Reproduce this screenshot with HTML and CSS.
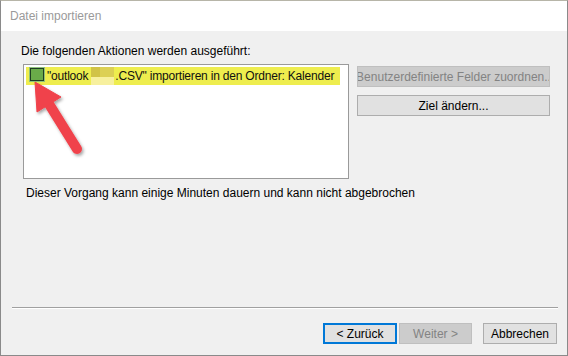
FILE: index.html
```html
<!DOCTYPE html>
<html lang="de">
<head>
<meta charset="utf-8">
<title>Datei importieren</title>
<link rel="stylesheet" href="styles.css">
</head>
<body>
<div class="window">
  <div class="titlebar">Datei importieren</div>
  <div class="content">
    <div class="label">Die folgenden Aktionen werden ausgeführt:</div>
    <div class="main-row">
      <div class="listbox">
        <div class="item">
          <span class="check"><span class="check-inner"></span></span>
          <span class="item-text">"outlook<span class="blur"></span>.CSV" importieren in den Ordner: Kalender</span>
        </div>
      </div>
      <div class="side-buttons">
        <div class="btn btn-wide disabled"><span class="btn-clip">Benutzerdefinierte Felder zuordnen..</span></div>
        <div class="btn btn-wide">Ziel ändern...</div>
      </div>
    </div>
    <div class="note">Dieser Vorgang kann einige Minuten dauern und kann nicht abgebrochen</div>
    <div class="footer">
      <div class="separator"></div>
      <div class="footer-buttons">
        <div class="btn btn-nav focused">&lt; Zurück</div>
        <div class="btn btn-nav btn-next disabled">Weiter &gt;</div>
        <div class="btn btn-nav cancel">Abbrechen</div>
      </div>
    </div>
  </div>
  <svg class="arrow" width="568" height="356" viewBox="0 0 568 356">
    <defs>
      <filter id="sh" x="-50%" y="-50%" width="200%" height="200%">
        <feDropShadow dx="1.5" dy="2" stdDeviation="1.6" flood-color="#000" flood-opacity="0.35"/>
      </filter>
    </defs>
    <g filter="url(#sh)" fill="#f0434b" stroke="#f0434b">
      <line x1="49" y1="104" x2="77" y2="149" stroke-width="10" stroke-linecap="round"/>
      <polygon points="35,82 61,97 37,112" stroke-width="1" stroke-linejoin="round"/>
    </g>
  </svg>
</div>
</body>
</html>
```
FILE: styles.css
```css
html, body {
  margin: 0;
  padding: 0;
}
body {
  width: 568px;
  height: 356px;
  overflow: hidden;
  font-family: "Liberation Sans", Arial, sans-serif;
  font-size: 12px;
  color: #000;
}
.window {
  position: relative;
  box-sizing: border-box;
  width: 568px;
  height: 356px;
  border: 1px solid #8a8a8a;
  border-top-color: #b7b5a8;
  display: flex;
  flex-direction: column;
  background: #f0f0f0;
}
.titlebar {
  height: 30px;
  background: #fff;
  color: #9a9a9a;
  padding-left: 9px;
  line-height: 30px;
  font-size: 12px;
}
.content {
  flex: 1;
  display: flex;
  flex-direction: column;
  padding: 0 0 0 19px;
}
.label {
  margin-top: 12px;
  height: 21px;
  line-height: 16px;
  padding-left: 1px;
}
.main-row {
  display: flex;
  gap: 8px;
}
.listbox {
  box-sizing: border-box;
  width: 326px;
  height: 115px;
  margin-left: 3px;
  background: #fff;
  border: 1px solid #9a9a9a;
  padding: 2px 0 0 2px;
}
.item {
  display: flex;
  align-items: flex-start;
  width: 314px;
  height: 18px;
  background: #eeed4e;
}
.check {
  flex: 0 0 auto;
  box-sizing: border-box;
  width: 16px;
  height: 15px;
  margin-left: 3px;
  padding: 1px;
  background: #8fc27a;
  display: flex;
}
.check-inner {
  flex: 1;
  border: 1px solid #1f3d22;
  background: #6aab49;
}
.item-text {
  margin-left: 2px;
  white-space: nowrap;
  color: #111;
  display: flex;
  align-items: center;
  height: 18px;
  letter-spacing: -0.2px;
}
.blur {
  display: inline-block;
  flex: 0 0 auto;
  width: 23px;
  height: 18px;
  margin: 0 1px 0 3px;
  background:
    linear-gradient(to bottom, transparent 0, transparent 10px, #f7f09e 10px, #f7f09e 18px),
    linear-gradient(to right, #d1c347 0, #d1c347 9px, #dcd055 9px, #dcd055 23px);
}
.side-buttons {
  display: flex;
  flex-direction: column;
  gap: 8px;
  padding-top: 2px;
}
.btn {
  box-sizing: border-box;
  height: 21px;
  border: 1px solid #adadad;
  background: #e1e1e1;
  display: flex;
  align-items: center;
  justify-content: center;
  white-space: nowrap;
  color: #000;
}
.btn-wide {
  width: 193px;
  overflow: hidden;
}
.btn.disabled {
  background: #cccccc;
  border-color: #bfbfbf;
  color: #838383;
}
.btn-clip {
  display: block;
  flex: 0 0 auto;
}
.note {
  margin-top: 6px;
  padding-left: 6px;
  line-height: 16px;
}
.footer {
  margin-top: auto;
  padding-bottom: 11px;
}
.separator {
  margin-left: -8px;
  width: 546px;
  height: 1px;
  background: #a0a0a0;
  border-bottom: 1px solid #fff;
}
.footer-buttons {
  display: flex;
  justify-content: flex-end;
  padding-right: 10px;
  margin-top: 14px;
  gap: 2px;
}
.btn-nav {
  width: 74px;
}
.btn-next {
  width: 73px;
}
.btn.focused {
  border: 2px solid #0078d7;
}
.btn.cancel {
  margin-left: 9px;
}
.arrow {
  position: absolute;
  left: -1px;
  top: -1px;
  pointer-events: none;
}
```
